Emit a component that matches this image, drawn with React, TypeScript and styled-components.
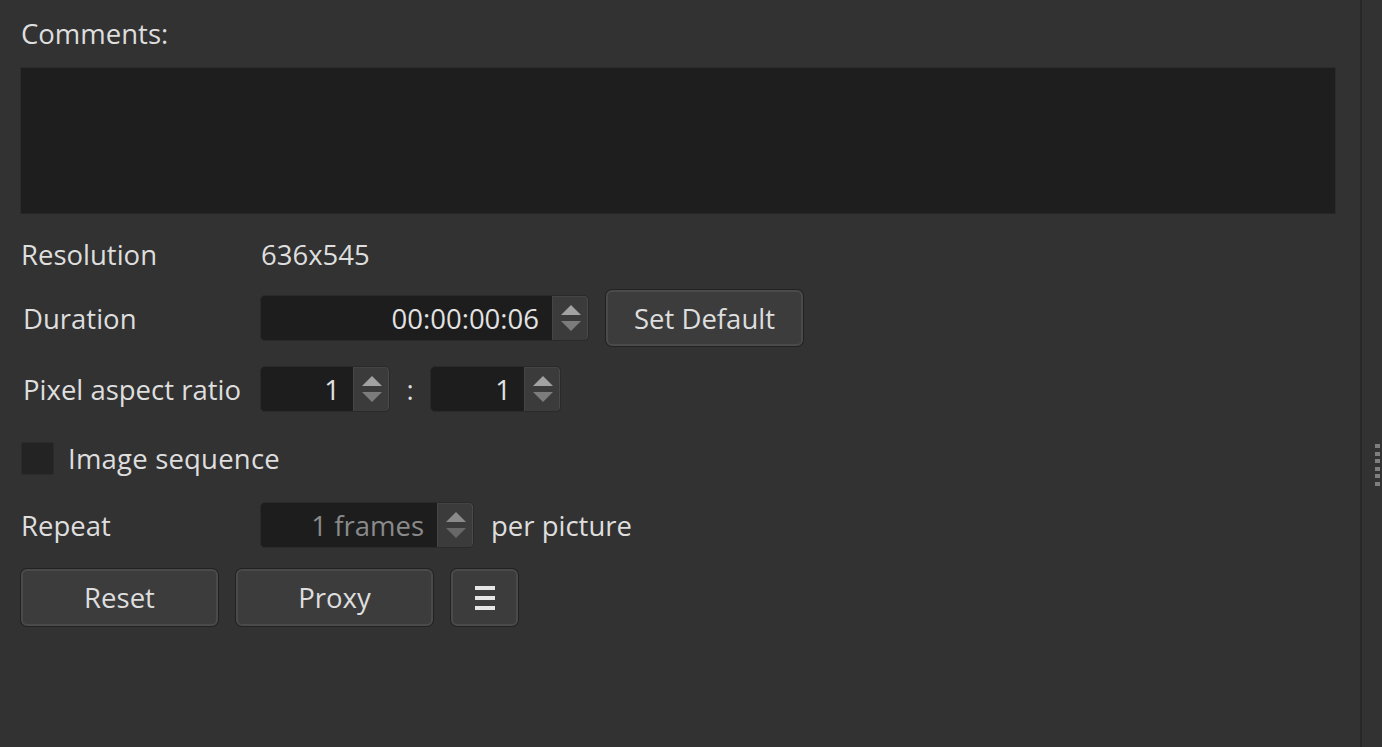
import React, {useState} from 'react';
import styled, {createGlobalStyle} from 'styled-components';

/**
 * App.tsx
 *
 * @desc: Clip properties panel (comments, resolution, duration, aspect ratio, sequence options)
 */

const GlobalStyle = createGlobalStyle`
    html, body {
        margin: 0;
        padding: 0;
        background: #323232;
    }
    #root {
        height: 747px;
    }
`;

const Page = styled.div`
    display: flex;
    height: 747px;
    background: #323232;
    font-family: "Open Sans", "Liberation Sans", sans-serif;
    font-size: 27.5px;
    color: #dedede;
    overflow: hidden;
`;

const Main = styled.div`
    flex: 1;
    display: flex;
    flex-direction: column;
    padding: 14px 24px 0 20px;
`;

const Divider = styled.div`
    width: 2px;
    background: #282828;
`;

const Side = styled.div`
    width: 20px;
    box-sizing: border-box;
    display: flex;
    justify-content: flex-end;
    padding-right: 2px;
`;

const Grip = styled.div`
    margin-top: 444px;
    display: flex;
    flex-direction: column;
    gap: 3.5px;
`;

const GripDot = styled.span`
    width: 5px;
    height: 4px;
    background: #7e7e7e;
`;

const Caption = styled.div`
    height: 40px;
    line-height: 40px;
    padding-left: 1px;
`;

const Comments = styled.textarea`
    margin-top: 13px;
    height: 147px;
    box-sizing: border-box;
    background: #1e1e1e;
    border: 1px solid #2c2c2c;
    border-bottom-color: #262626;
    color: #dedede;
    font: inherit;
    resize: none;
    outline: none;
`;

const Row = styled.div<{$top: number; $height: number}>`
    display: flex;
    align-items: center;
    margin-top: ${p => p.$top}px;
    height: ${p => p.$height}px;
`;

const Label = styled.div<{$indent?: number}>`
    width: 240px;
    padding-left: ${p => p.$indent ?? 1}px;
    box-sizing: border-box;
    white-space: nowrap;
`;

const Value = styled.div`
    padding-left: 1px;
`;

const SpinBox = styled.div<{$width: number}>`
    display: flex;
    width: ${p => p.$width}px;
    height: 46px;
    box-sizing: border-box;
    border: 1px solid #2a2a2a;
    border-radius: 5px;
    background: #1d1d1d;
    overflow: hidden;
`;

const SpinText = styled.div<{$disabled?: boolean}>`
    flex: 1;
    text-align: right;
    padding-right: 13px;
    line-height: 46px;
    color: ${p => p.$disabled ? '#8a8a8a' : '#e2e2e2'};
`;

const SpinButtons = styled.div`
    width: 35px;
    display: flex;
    flex-direction: column;
    align-items: center;
    justify-content: center;
    gap: 6px;
    background: #3b3b3b;
    border-left: 1px solid #454545;
    border-radius: 0 4px 4px 0;
    box-shadow: inset -1px 0 0 #4a4a4a, inset 0 1px 0 #444;
`;

const Arrow = styled.span<{$down?: boolean; $disabled?: boolean}>`
    width: 0;
    height: 0;
    border-left: 10px solid transparent;
    border-right: 10px solid transparent;
    ${p => p.$down
        ? `border-top: 10px solid ${p.$disabled ? '#686868' : '#7c7c7c'};`
        : `border-bottom: 10px solid ${p.$disabled ? '#8a8a8a' : '#a2a2a2'};`}
`;

const Colon = styled.div`
    width: 40px;
    text-align: center;
`;

const Button = styled.button<{$width: number; $height?: number}>`
    width: ${p => p.$width}px;
    height: ${p => p.$height ?? 57}px;
    box-sizing: border-box;
    background: #3c3c3c;
    border: 2px solid #4a4a4a;
    border-radius: 6px;
    box-shadow: 0 0 0 1px #222;
    color: #dedede;
    font: inherit;
    padding: 0;
    display: flex;
    align-items: center;
    justify-content: center;
    cursor: pointer;
`;

const Buttons = styled(Row)`
    gap: 18px;
    padding-left: 1px;
`;

const Bars = styled.span`
    display: flex;
    flex-direction: column;
    gap: 6px;
    span {
        width: 20px;
        height: 4px;
        background: #e6e6e6;
    }
`;

const Check = styled.div<{$checked: boolean}>`
    width: 33px;
    height: 33px;
    margin-left: 1px;
    box-sizing: border-box;
    background: ${p => p.$checked ? '#3c6e9e' : '#232323'};
    border: 1px solid #2b2b2b;
    border-radius: 2px;
    cursor: pointer;
`;

const CheckLabel = styled.div`
    margin-left: 14px;
    letter-spacing: 0.2px;
`;

const Suffix = styled.div`
    margin-left: 17px;
`;

const Spin = ({width, text, disabled}: any) => (
    <SpinBox $width={width}>
        <SpinText $disabled={disabled}>{text}</SpinText>
        <SpinButtons>
            <Arrow $disabled={disabled} />
            <Arrow $down $disabled={disabled} />
        </SpinButtons>
    </SpinBox>
);

const App = () => {

    const [sequence, setSequence] = useState(false); //image sequence checkbox

    return (
        <Page>
            <GlobalStyle />
            <Main>
                <Caption>Comments:</Caption>
                <Comments />

                <Row $top={20} $height={40}>
                    <Label>Resolution</Label>
                    <Value>636x545</Value>
                </Row>

                <Row $top={16} $height={56}>
                    <Label $indent={3}>Duration</Label>
                    <Spin width={329} text="00:00:00:06" />
                    <Button $width={197} $height={56} style={{marginLeft: 17}}>Set Default</Button>
                </Row>

                <Row $top={20} $height={46}>
                    <Label $indent={3}>Pixel aspect ratio</Label>
                    <Spin width={130} text="1" />
                    <Colon>:</Colon>
                    <Spin width={131} text="1" />
                </Row>

                <Row $top={23} $height={46}>
                    <Check $checked={sequence} onClick={() => setSequence(!sequence)} />
                    <CheckLabel>Image sequence</CheckLabel>
                </Row>

                <Row $top={21} $height={46}>
                    <Label>Repeat</Label>
                    <Spin width={214} text="1 frames" disabled />
                    <Suffix>per picture</Suffix>
                </Row>

                <Buttons $top={21} $height={57}>
                    <Button $width={197}>Reset</Button>
                    <Button $width={197}>Proxy</Button>
                    <Button $width={67}>
                        <Bars><span /><span /><span /></Bars>
                    </Button>
                </Buttons>
            </Main>
            <Divider />
            <Side>
                <Grip>
                    {[0, 1, 2, 3, 4, 5].map(i => <GripDot key={i} />)}
                </Grip>
            </Side>
        </Page>
    );
}

export default App;
